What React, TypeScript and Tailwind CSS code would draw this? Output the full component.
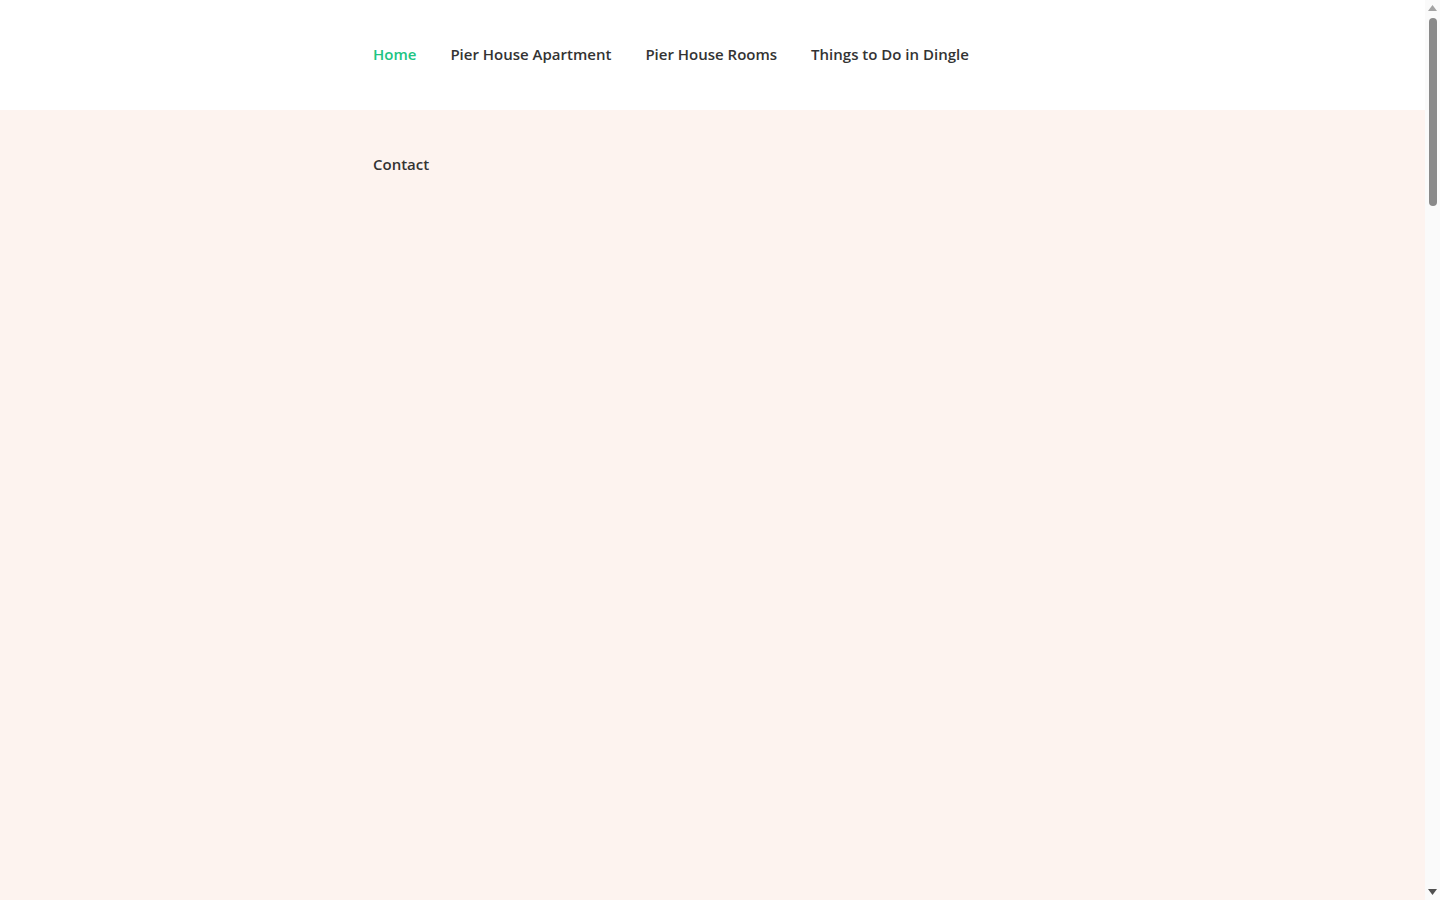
const links = [
  { label: "Home", active: true },
  { label: "Pier House Apartment" },
  { label: "Pier House Rooms" },
  { label: "Things to Do in Dingle" },
  { label: "Contact" },
];

// stand-in for the browser's scrollbar seen in the screenshot
function ScrollBar() {
  return (
    <aside className="sticky top-0 flex h-screen w-[15px] shrink-0 flex-col items-center bg-[#fafafa]">
      <svg width="15" height="15" viewBox="0 0 15 15" className="shrink-0">
        <path d="M3 11 L7.5 5 L12 11 Z" fill="#a3a3a3" />
      </svg>
      <div className="mt-[3px] h-[188px] w-[8px] rounded-full bg-[#8a8a8a]" />
      <div className="flex-1" />
      <svg width="15" height="15" viewBox="0 0 15 15" className="shrink-0">
        <path d="M3 4 L12 4 L7.5 10 Z" fill="#505050" />
      </svg>
    </aside>
  );
}

export default function App() {
  return (
    <div
      className="flex bg-[#fafafa] text-[#333333]"
      style={{ fontFamily: '"Open Sans", "Noto Sans", Arial, sans-serif' }}
    >
      <div className="min-w-0 flex-1 bg-[#fdf3ef]">
        <header className="h-[110px] bg-white">
          <nav className="mx-auto w-[679px]">
            <ul className="flex flex-wrap gap-x-[34px]">
              {links.map((l) => (
                <li key={l.label} className="flex h-[110px] items-center">
                  <a
                    href="#"
                    className={
                      "pb-[2px] text-[15px] font-semibold " +
                      (l.active ? "text-[#20c482]" : "text-[#333333]")
                    }
                  >
                    {l.label}
                  </a>
                </li>
              ))}
            </ul>
          </nav>
        </header>
        <main className="h-[4055px]" />
      </div>
      <ScrollBar />
    </div>
  );
}
